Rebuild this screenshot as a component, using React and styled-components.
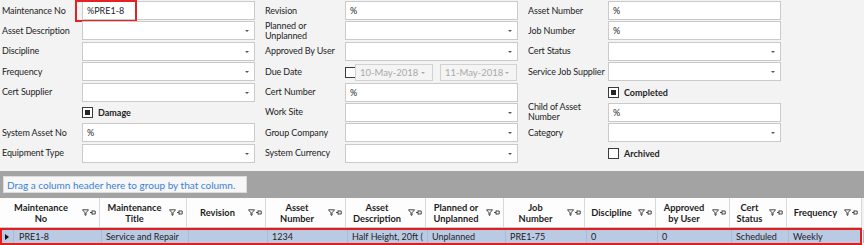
import React from "react";
import styled, { createGlobalStyle } from "styled-components";

const GlobalStyle = createGlobalStyle`
  html, body {
    margin: 0;
    padding: 0;
    background: #f3f3f3;
  }
`;

const COLS = "100px 87px 79px 80px 80px 78px 81px 71px 74px 57px 75px";

const Page = styled.div`
  width: 864px;
  height: 245px;
  overflow: hidden;
  background: #f3f3f3;
  font-family: Lato, "Liberation Sans", sans-serif;
  font-size: 9px;
  color: #1e1e1e;
`;

const Form = styled.div`
  display: flex;
  gap: 10px;
  height: 171px;
  box-sizing: border-box;
  padding: 1px 0 0 2px;
`;

const FieldColumn = styled.div`
  display: grid;
  grid-template-columns: 80px 173px;
  grid-auto-rows: 19px;
  row-gap: 1.4px;
  align-content: start;
`;

const Label = styled.div`
  display: flex;
  align-items: center;
  line-height: 10px;
  letter-spacing: -0.12px;
  white-space: nowrap;
`;

const TextBox = styled.div`
  position: relative;
  display: flex;
  align-items: center;
  box-sizing: border-box;
  height: 19px;
  padding-left: 4px;
  background: #fff;
  border: 1px solid #cacaca;

  ${({ $combo }) =>
    $combo &&
    `
    &::after {
      content: "";
      position: absolute;
      right: 5px;
      top: 8px;
      border-left: 2px solid transparent;
      border-right: 2px solid transparent;
      border-top: 2px solid #555;
    }
  `}
`;

const Highlight = styled.div`
  position: absolute;
  left: -8px;
  top: -2px;
  width: 58px;
  height: 18px;
  border: 2px solid #e52222;
`;

const CheckCell = styled.div`
  grid-column: 2;
  display: flex;
  align-items: center;
  gap: 5px;
  font-weight: 700;
`;

const Box = styled.span`
  position: relative;
  display: inline-block;
  width: 11px;
  height: 11px;
  box-sizing: border-box;
  background: #fff;
  border: 1px solid #3a3a3a;

  ${({ $mixed }) =>
    $mixed &&
    `
    &::after {
      content: "";
      position: absolute;
      left: 2px;
      top: 2px;
      width: 5px;
      height: 5px;
      background: #262626;
    }
  `}
`;

const DateRow = styled.div`
  display: flex;
  align-items: center;
  padding-top: 2px;
`;

const DateBox = styled.div`
  position: relative;
  display: flex;
  align-items: center;
  box-sizing: border-box;
  width: ${({ $w }) => $w}px;
  height: 17px;
  margin-left: ${({ $ml }) => $ml}px;
  padding-left: 4px;
  background: #f4f4f4;
  border: 1px solid #d2d2d2;
  color: #a9a9a9;
  font-size: 9.5px;

  &::after {
    content: "";
    position: absolute;
    right: 7px;
    top: 7px;
    border-left: 2px solid transparent;
    border-right: 2px solid transparent;
    border-top: 2px solid #a9a9a9;
  }
`;

const GroupBand = styled.div`
  height: 27px;
  box-sizing: border-box;
  padding: 5px 0 0 3px;
  background: #a3a3a3;
`;

const GroupPanel = styled.div`
  display: flex;
  align-items: center;
  box-sizing: border-box;
  width: 244px;
  height: 17px;
  padding-left: 3px;
  background: #f7f7f7;
  border: 1px solid #dcdcdc;
  color: #3b7fd4;
  font-size: 10px;
`;

const HeaderRow = styled.div`
  display: grid;
  grid-template-columns: ${COLS};
  width: 862px;
  height: 30px;
  box-sizing: border-box;
  background: #fdfdfd;
  border-bottom: 1px solid #c9c9c9;
`;

const HeaderCell = styled.div`
  display: flex;
  align-items: center;
  border-right: 1px solid #d9d9d9;
  padding-right: 3px;
`;

const HeaderText = styled.div`
  flex: 1;
  text-align: center;
  font-weight: 700;
  font-size: 9.3px;
  line-height: 11px;
  color: #1e1e1e;
`;

const DataRow = styled.div`
  display: grid;
  grid-template-columns: ${COLS};
  width: 862px;
  height: 17px;
  box-sizing: border-box;
  background: #b9cae2;
  border: 2px solid #e41c1c;
`;

const DataCell = styled.div`
  display: flex;
  align-items: center;
  overflow: hidden;
  white-space: nowrap;
  padding-left: ${({ $pad }) => $pad ?? 4}px;
  border-right: 1px solid #a9bcd6;
`;

const Indicator = styled.span`
  display: flex;
  align-items: center;
  width: 11px;
  height: 100%;
  margin-right: 5px;
  border-right: 1px solid #a9bcd6;

  &::before {
    content: "";
    margin-left: 3px;
    border-top: 3px solid transparent;
    border-bottom: 3px solid transparent;
    border-left: 4px solid #111;
  }
`;

const HeaderIcons = () => (
  <svg width="14" height="7" viewBox="0 0 14 7">
    <path d="M0.5 0.8 H6.5 L4 3.8 V6.2 H3 V3.8 Z" fill="none" stroke="#333" strokeWidth="0.9" />
    <path d="M8 3.5 H10 M10 1.5 V5.5 M10 2 H13.2 V5 H10" fill="none" stroke="#333" strokeWidth="0.9" />
  </svg>
);

const headers = [
  ["Maintenance", "No"],
  ["Maintenance", "Title"],
  ["Revision"],
  ["Asset", "Number"],
  ["Asset", "Description"],
  ["Planned or", "Unplanned"],
  ["Job", "Number"],
  ["Discipline"],
  ["Approved", "by User"],
  ["Cert", "Status"],
  ["Frequency"],
];

const row = [
  "Service and Repair",
  "",
  "1234",
  "Half Height, 20ft (",
  "Unplanned",
  "PRE1-75",
  "0",
  "0",
  "Scheduled",
  "Weekly",
];

const Field = ({ label, value, combo, children }) => (
  <>
    <Label>{label}</Label>
    <TextBox $combo={combo}>
      {children}
      {value}
    </TextBox>
  </>
);

const Check = ({ label, mixed }) => (
  <CheckCell>
    <Box $mixed={mixed} />
    {label}
  </CheckCell>
);

export default function App() {
  return (
    <Page>
      <GlobalStyle />
      <Form>
        <FieldColumn>
          <Field label="Maintenance No" value="%PRE1-8">
            <Highlight />
          </Field>
          <Field label="Asset Description" combo />
          <Field label="Discipline" combo />
          <Field label="Frequency" combo />
          <Field label="Cert Supplier" combo />
          <Check label="Damage" mixed />
          <Field label="System Asset No" value="%" />
          <Field label="Equipment Type" combo />
        </FieldColumn>

        <FieldColumn>
          <Field label="Revision" value="%" />
          <Field label={<>Planned or<br />Unplanned</>} combo />
          <Field label="Approved By User" combo />
          <Label>Due Date</Label>
          <DateRow>
            <Box />
            <DateBox $w={78} $ml={-1}>10-May-2018</DateBox>
            <DateBox $w={77} $ml={7}>11-May-2018</DateBox>
          </DateRow>
          <Field label="Cert Number" value="%" />
          <Field label="Work Site" combo />
          <Field label="Group Company" combo />
          <Field label="System Currency" combo />
        </FieldColumn>

        <FieldColumn>
          <Field label="Asset Number" value="%" />
          <Field label="Job Number" value="%" />
          <Field label="Cert Status" combo />
          <Field label="Service Job Supplier" combo />
          <Check label="Completed" mixed />
          <Field label={<>Child of Asset<br />Number</>} value="%" />
          <Field label="Category" combo />
          <Check label="Archived" />
        </FieldColumn>
      </Form>

      <GroupBand>
        <GroupPanel>Drag a column header here to group by that column.</GroupPanel>
      </GroupBand>

      <HeaderRow>
        {headers.map((lines, i) => (
          <HeaderCell key={i}>
            <HeaderText>
              {lines.map((l, j) => (
                <div key={j}>{l}</div>
              ))}
            </HeaderText>
            <HeaderIcons />
          </HeaderCell>
        ))}
      </HeaderRow>

      <DataRow>
        <DataCell $pad={0}>
          <Indicator />
          PRE1-8
        </DataCell>
        {row.map((v, i) => (
          <DataCell key={i}>{v}</DataCell>
        ))}
      </DataRow>
    </Page>
  );
}
